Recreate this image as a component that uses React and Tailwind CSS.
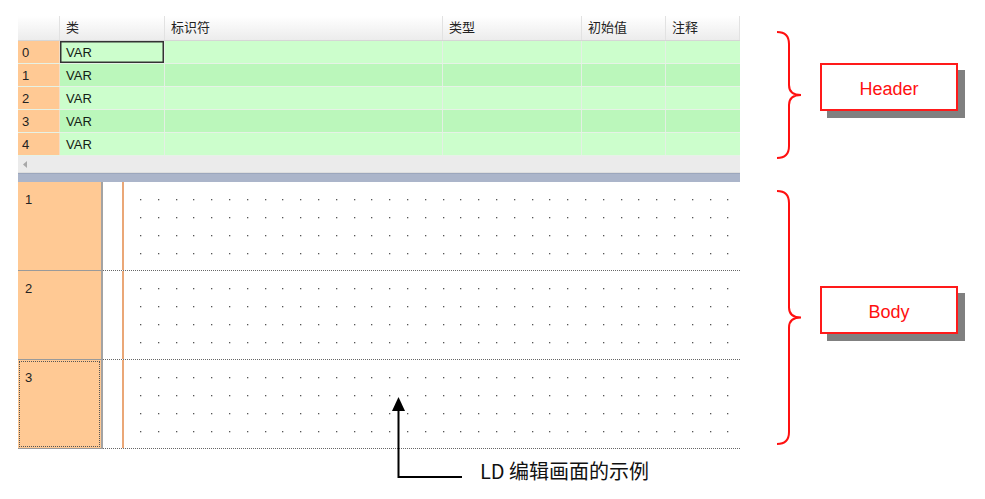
const cols = [
  { label: "类", w: "w-[105px]" },
  { label: "标识符", w: "w-[278px]" },
  { label: "类型", w: "w-[139px]" },
  { label: "初始值", w: "w-[84px]" },
  { label: "注释", w: "flex-1" },
];

const rows = [0, 1, 2, 3, 4];

function DotGrid() {
  const xs = Array.from({ length: 34 }, (_, i) => 16 + Math.round(i * 17.8));
  const ys = [17, 35, 53, 71];
  return (
    <svg width="616" height="88" className="block">
      {ys.map((y) =>
        xs.map((x) => (
          <rect key={x + "-" + y} x={x} y={y} width="1.3" height="1.3" fill="#555" />
        ))
      )}
    </svg>
  );
}

function Brace({ h }) {
  const m = h / 2;
  return (
    <svg width="26" height={h} className="block shrink-0">
      <path
        d={`M1 1 Q13 1 13 13 L13 ${m - 10} Q13 ${m} 25 ${m} Q13 ${m} 13 ${m + 10} L13 ${h - 13} Q13 ${h - 1} 1 ${h - 1}`}
        fill="none"
        stroke="#ff1010"
        strokeWidth="2"
      />
    </svg>
  );
}

function Callout({ text }) {
  return (
    <div className="mb-4 w-[138px] h-[48px] border-2 border-[#ff1a1a] bg-white shadow-[7px_7px_0_#808080] flex items-center justify-center pt-[5px] text-[18px] text-[#ff1010]">
      {text}
    </div>
  );
}

function BodyRow({ n, focus }) {
  return (
    <div className="flex h-[89px]">
      <div className="w-[85px] h-full bg-[#ffc994] border-r-2 border-b border-r-[#a3a3a3] border-b-[#9a9a9a] p-[1px]">
        <div
          className={
            focus
              ? "h-full border border-dotted border-[#555] pl-[5px] pt-[8px] text-[13px] leading-4 text-[#222]"
              : "h-full pl-[6px] pt-[9px] text-[13px] leading-4 text-[#222]"
          }
        >
          {n}
        </div>
      </div>
      <div className="flex-1 flex border-b border-dotted border-[#666]">
        <div className="w-[19px]" />
        <div className="w-[2px] bg-[#eaa777]" />
        <DotGrid />
      </div>
    </div>
  );
}

export default function App() {
  return (
    <div className="relative w-[985px] h-[499px] bg-white overflow-hidden font-['Liberation_Sans','Noto_Sans_CJK_SC',sans-serif]">
      <div className="flex pt-[16px] pl-[18px]">
        {/* editor */}
        <div className="w-[722px]">
          <div className="flex h-[25px] bg-gradient-to-b from-white to-[#ececec] border-b border-[#d6d6d6] text-[13px] text-[#222]">
            <div className="w-[42px] border-r border-[#e2e2e2]" />
            {cols.map((c) => (
              <div key={c.label} className={`${c.w} border-r border-[#e2e2e2] pl-[6px] pt-[4px] leading-4`}>
                {c.label}
              </div>
            ))}
          </div>
          {rows.map((r) => (
            <div
              key={r}
              className={`flex h-[23px] border-b border-[#e6f2e6] text-[13px] text-[#142014] ${
                r % 2 === 0 ? "bg-[#ccfecc]" : "bg-[#bbf7bb]"
              }`}
            >
              <div className="w-[42px] bg-[#ffc994] border-r border-[#f3dcc4] pl-[4px] pt-[4px] leading-4 text-[#222]">
                {r}
              </div>
              <div
                className={`w-[105px] border-r border-[#e4efe4] pl-[6px] pt-[4px] leading-4 ${
                  r === 0 ? "shadow-[inset_0_0_0_1.5px_#333]" : ""
                }`}
              >
                VAR
              </div>
              <div className="w-[278px] border-r border-[#e4efe4]" />
              <div className="w-[139px] border-r border-[#e4efe4]" />
              <div className="w-[84px] border-r border-[#e4efe4]" />
              <div className="flex-1" />
            </div>
          ))}
          <div className="h-[17px] bg-[#ebebeb] border-b border-[#dedede] flex items-center pl-[5px]">
            <svg width="5" height="7">
              <path d="M4 0 L0 3.5 L4 7 Z" fill="#a8a8a8" />
            </svg>
          </div>
          <div className="h-[9px] bg-[#abb5ca] border-t border-[#9ca7bd]" />
          <BodyRow n="1" />
          <BodyRow n="2" />
          <BodyRow n="3" focus />
        </div>

        {/* annotations */}
        <div className="pt-[15px] pl-[36px] flex flex-col gap-[31px]">
          <div className="flex items-center gap-[18px]">
            <Brace h={128} />
            <Callout text="Header" />
          </div>
          <div className="flex items-center gap-[18px]">
            <Brace h={255} />
            <Callout text="Body" />
          </div>
        </div>
      </div>

      <div className="pl-[480px] mt-[10px] text-[20px] leading-[24px] text-[#111] font-['Noto_Sans_CJK_SC',sans-serif]">
        LD 编辑画面的示例
      </div>

      <svg width="80" height="84" className="absolute left-[390px] top-[396px]">
        <path d="M8.5 1 L15 15 L2 15 Z" fill="#000" />
        <path d="M8.5 14 L8.5 81 L72 81" fill="none" stroke="#000" strokeWidth="2" />
      </svg>
    </div>
  );
}
